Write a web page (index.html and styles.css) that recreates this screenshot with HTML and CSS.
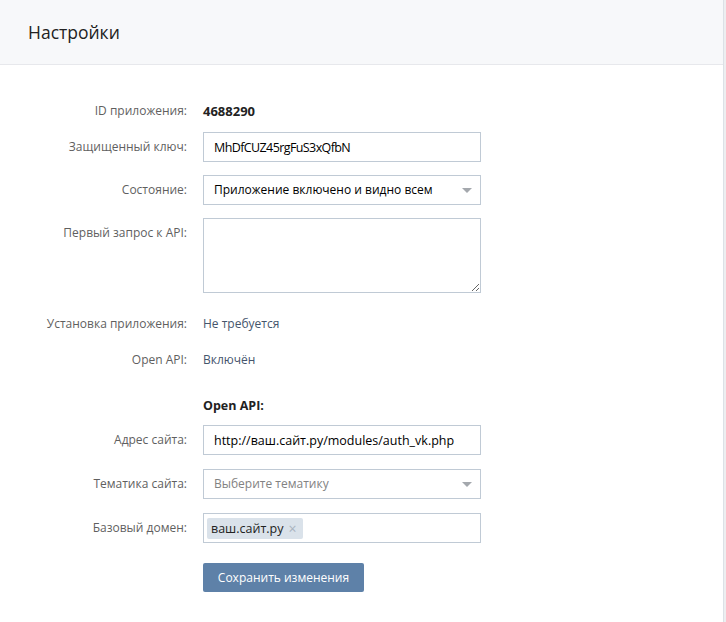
FILE: index.html
```html
<!DOCTYPE html>
<html lang="ru">
<head>
<meta charset="utf-8">
<link rel="stylesheet" href="styles.css">
</head>
<body>
<div class="card">
  <div class="head">Настройки</div>
  <div class="form">
    <div class="row text gap-12">
      <div class="label">ID приложения:</div>
      <div class="value bold">4688290</div>
    </div>
    <div class="row gap-13">
      <div class="label">Защищенный ключ:</div>
      <input class="field key" type="text" value="MhDfCUZ45rgFuS3xQfbN">
    </div>
    <div class="row gap-13">
      <div class="label">Состояние:</div>
      <div class="field select"><span>Приложение включено и видно всем</span><i class="arrow"></i></div>
    </div>
    <div class="row gap-20">
      <div class="label">Первый запрос к API:</div>
      <textarea class="field area"></textarea>
    </div>
    <div class="row text gap-16">
      <div class="label">Установка приложения:</div>
      <div class="value">Не требуется</div>
    </div>
    <div class="row text gap-26">
      <div class="label">Open API:</div>
      <div class="value">Включён</div>
    </div>
    <div class="row text gap-10">
      <div class="label"></div>
      <div class="value heading">Open API:</div>
    </div>
    <div class="row gap-14">
      <div class="label">Адрес сайта:</div>
      <input class="field url" type="text" value="http://ваш.сайт.ру/modules/auth_vk.php">
    </div>
    <div class="row gap-14">
      <div class="label">Тематика сайта:</div>
      <div class="field select placeholder"><span>Выберите тематику</span><i class="arrow"></i></div>
    </div>
    <div class="row gap-20">
      <div class="label">Базовый домен:</div>
      <div class="field tokens"><span class="token">ваш.сайт.ру<span class="x">×</span></span></div>
    </div>
    <div class="row">
      <div class="label"></div>
      <button class="btn">Сохранить изменения</button>
    </div>
  </div>
</div>
</body>
</html>
```
FILE: styles.css
```css
html, body {
  margin: 0;
  padding: 0;
}
body {
  background: #edeef0;
  font-family: "Open Sans", "Noto Sans", sans-serif;
  font-size: 12px;
  height: 622px;
  overflow: hidden;
}
.card {
  width: 723px;
  height: 622px;
  background: #fff;
  border-right: 1px solid #dce1e6;
}
.head {
  height: 64px;
  background: #f7f8fa;
  border-bottom: 1px solid #e7e8ec;
  padding-left: 28px;
  line-height: 64px;
  font-size: 17.5px;
  color: #222;
}
.form {
  padding-top: 35px;
}
.row {
  display: flex;
  align-items: flex-start;
}
.row.text {
  padding-top: 1px;
  height: 19px;
}
.gap-10 { margin-bottom: 10px; }
.gap-12 { margin-bottom: 12px; }
.gap-13 { margin-bottom: 13px; }
.gap-14 { margin-bottom: 14px; }
.gap-16 { margin-bottom: 16px; }
.gap-20 { margin-bottom: 20px; }
.gap-26 { margin-bottom: 26px; }
.label {
  width: 203px;
  flex: none;
  box-sizing: border-box;
  padding-right: 16px;
  text-align: right;
  color: #5f5f5f;
  line-height: 30px;
}
.row.text .label,
.row.text .value {
  line-height: 20px;
}
.value {
  color: #45556c;
}
.value.bold {
  font-weight: 700;
  font-size: 13px;
  color: #222;
}
.value.heading {
  font-weight: 700;
  font-size: 12.5px;
  color: #222;
}
.field {
  width: 278px;
  height: 30px;
  box-sizing: border-box;
  border: 1px solid #c0cad5;
  background: #fff;
  padding: 0 10px;
  font-family: inherit;
  font-size: 12px;
  color: #000;
  outline: none;
  margin: 0;
}
input.field {
  line-height: 28px;
  font-size: 12.5px;
}
input.key {
  letter-spacing: -0.6px;
}
.select {
  display: flex;
  align-items: center;
  justify-content: space-between;
  line-height: 28px;
}
.select.placeholder span {
  color: #828282;
}
.arrow {
  width: 0;
  height: 0;
  border-left: 5px solid transparent;
  border-right: 5px solid transparent;
  border-top: 5px solid #a4a8ad;
  margin-right: -2px;
}
.area {
  height: 75px;
  resize: both;
  padding: 6px 10px;
}
.tokens {
  display: flex;
  align-items: center;
  padding: 0 3px;
}
.token {
  background: #dae2ea;
  border-radius: 2px;
  color: #222;
  font-size: 12.5px;
  height: 21px;
  line-height: 21px;
  padding: 0 6px 0 4px;
  display: inline-flex;
  align-items: center;
}
.token .x {
  color: #a9b3bf;
  font-size: 14px;
  margin-left: 5px;
}
.btn {
  height: 29px;
  width: 161px;
  border: none;
  border-radius: 2px;
  background: #5e81a8;
  color: #fff;
  font-family: inherit;
  font-size: 12px;
  padding: 0;
}
```
